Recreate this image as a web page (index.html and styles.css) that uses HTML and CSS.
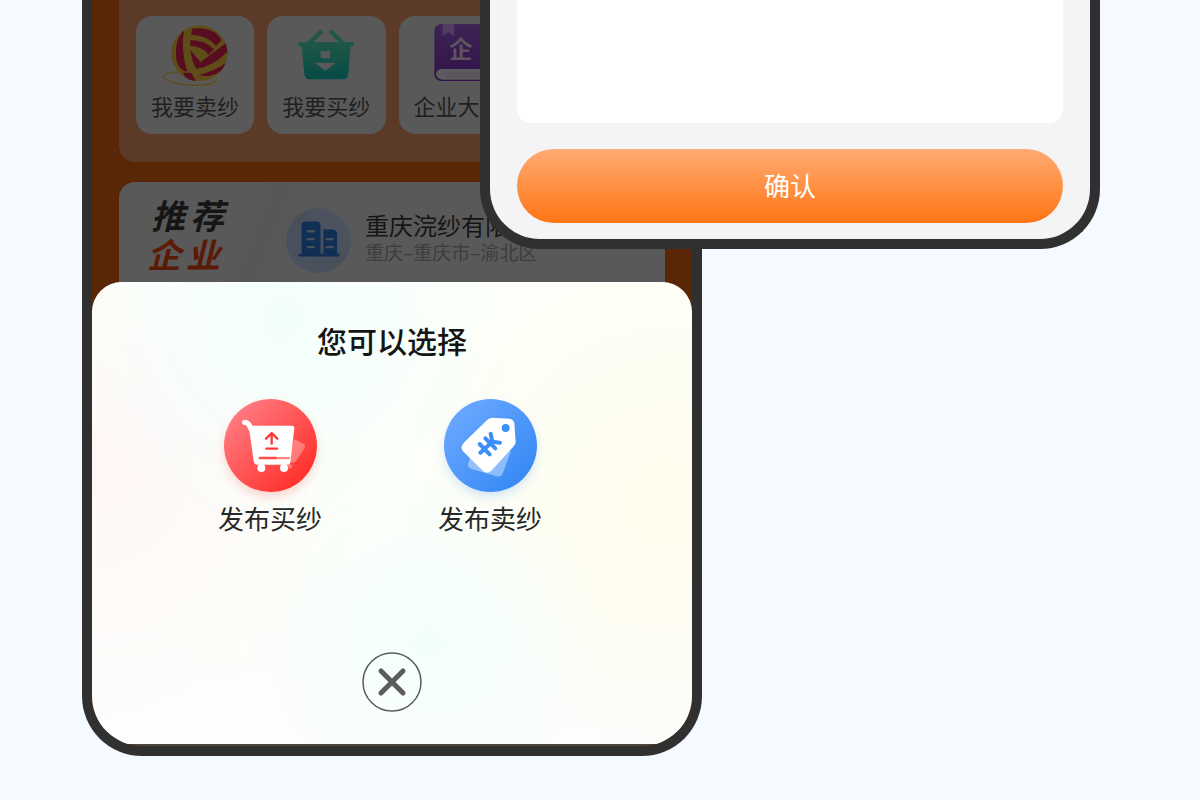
FILE: index.html
```html
<!DOCTYPE html>
<html lang="zh-CN">
<head>
    <meta charset="UTF-8">
    <meta name="viewport" content="width=device-width, initial-scale=1.0">
    <title>发布选择</title>
    <link rel="stylesheet" href="styles.css">
</head>
<body>
    <main class="stage">
        <section class="phone">
            <div class="home">
                <div class="menu">
                    <a class="tile" href="#">
                        <svg class="tile-icon" viewBox="246 72 198 192" aria-hidden="true">
                            <defs>
                                <clipPath id="ball"><circle cx="358" cy="160" r="84"/></clipPath>
                            </defs>
                            <circle cx="358" cy="160" r="84" fill="#5f4d19"/>
                            <g clip-path="url(#ball)" fill="#570c20">
                                <path d="M312 92Q282 118 289 180Q296 210 322 217Q302 150 312 92Z"/>
                                <path d="M336 86Q400 78 425 120L408 138Q385 106 333 104Z"/>
                                <path d="M331 120Q378 121 402 148L386 164Q367 139 331 138Z"/>
                                <path d="M331 151L362 186L445 124V168Q400 200 350 208Q334 180 331 151Z"/>
                                <path d="M308 218L332 215L350 246Q322 246 308 218Z"/>
                                <path d="M354 226Q404 214 442 186Q430 220 385 229Z"/>
                            </g>
                            <g clip-path="url(#ball)" fill="none" stroke="#5f4d19">
                                <path d="M333 145Q358 150 374 176" stroke-width="13"/>
                                <path d="M350 213Q404 204 444 162" stroke-width="13"/>
                            </g>
                            <path d="M336 217Q250 211 251 232Q268 252 340 256Q410 257 410 235" fill="none" stroke="#5f4d19" stroke-width="4"/>
                        </svg>
                        <span>我要卖纱</span>
                    </a>
                    <a class="tile" href="#">
                        <svg class="tile-icon" viewBox="100 72 198 192" aria-hidden="true">
                            <defs>
                                <linearGradient id="basket" x1="0" y1="0" x2="0" y2="1">
                                    <stop offset="0" stop-color="#205747"/>
                                    <stop offset="1" stop-color="#064b46"/>
                                </linearGradient>
                            </defs>
                            <path d="M150 129L183 96M249 129L215 96" stroke="#205747" stroke-width="13" stroke-linecap="round"/>
                            <path d="M120 126H278Q284 127 284 133Q284 139 273 140L266 222Q264 238 250 238H150Q136 238 134 222L126 140Q114 139 114 132Q114 127 120 126Z" fill="url(#basket)"/>
                            <path d="M183 153H211V174H183ZM165 188H229L197 212Z" fill="#595959"/>
                        </svg>
                        <span>我要买纱</span>
                    </a>
                    <a class="tile" href="#">
                        <svg class="tile-icon" viewBox="492 72 198 192" aria-hidden="true">
                            <defs>
                                <linearGradient id="book" x1="0" y1="0" x2="0" y2="1">
                                    <stop offset="0" stop-color="#3d2555"/>
                                    <stop offset="1" stop-color="#301248"/>
                                </linearGradient>
                            </defs>
                            <rect x="520" y="72" width="170" height="171" rx="20" fill="url(#book)"/>
                            <path d="M545 72H579V108L562 96L545 108Z" fill="#503d62"/>
                            <path d="M690 207H542Q526 208 525 223Q526 238 544 239H690Z" fill="#5c5a5e"/>
                            <path d="M546 220H690M552 228H690" stroke="#514e55" stroke-width="2"/>
                            <text class="book-text" x="600" y="175" text-anchor="middle">企</text>
                        </svg>
                        <span>企业大厅</span>
                    </a>
                </div>
                <div class="recommend">
                    <h2 class="recommend-title">
                        <span class="word"><span>推</span><span>荐</span></span>
                        <span class="word accent"><span>企</span><span>业</span></span>
                    </h2>
                    <svg class="avatar" viewBox="0 0 196 196" aria-hidden="true">
                        <defs>
                            <linearGradient id="sky" x1="0" y1="1" x2="1" y2="0">
                                <stop offset="0" stop-color="#4a5361"/>
                                <stop offset="0.5" stop-color="#484f5b"/>
                                <stop offset="1" stop-color="#515761"/>
                            </linearGradient>
                        </defs>
                        <circle cx="98" cy="98" r="98" fill="url(#sky)"/>
                        <path d="M47 138V54Q47 41 60 41H91Q104 41 104 54V138H113V65H140Q154 66 154 78V138H161V146H38V138Z" fill="#112f54"/>
                        <path d="M66 70H84M66 94H84M66 118H84M123 94H141M123 118H141" stroke="#46505e" stroke-width="7" stroke-linecap="round"/>
                    </svg>
                    <div class="company">
                        <div class="company-name">重庆浣纱有限公司</div>
                        <div class="company-area">重庆–重庆市–渝北区</div>
                    </div>
                </div>
            </div>

            <div class="sheet">
                <h1 class="sheet-title">您可以选择</h1>
                <div class="choices">
                    <button class="choice" type="button">
                        <svg class="choice-icon buy" viewBox="42 40 279 279" aria-hidden="true">
                            <path d="M252 160L280 174Q288 179 284 187L258 226Q252 234 242 230L236 226Z" fill="#fff" opacity="0.3"/>
                            <circle cx="239" cy="242" r="7" fill="#fff" opacity="0.3"/>
                            <path d="M104 110Q116 110 122 128" fill="none" stroke="#fff" stroke-width="16" stroke-linecap="round"/>
                            <path d="M116 120H247Q254 121 253 128L242 222Q243 237 232 237H142Q133 237 131 227Z" fill="#fff"/>
                            <circle cx="154" cy="247" r="12" fill="#fff"/>
                            <circle cx="222" cy="247" r="12" fill="#fff"/>
                            <path d="M185 174V144M168 159L185 142L202 159M169 189H201" fill="none" stroke="#ff3a36" stroke-width="7" stroke-linecap="round" stroke-linejoin="round"/>
                            <path d="M149 217H200" stroke="#ff4a46" stroke-width="7" stroke-linecap="round"/>
                            <path d="M198 214H240L239 221H204Z" fill="#ff8582"/>
                        </svg>
                        <span>发布买纱</span>
                    </button>
                    <button class="choice" type="button">
                        <svg class="choice-icon sell" viewBox="42 40 279 279" aria-hidden="true">
                            <path d="M122 212L114 235Q112 245 122 249L200 272Q212 275 218 265L243 194Z" fill="#fff" opacity="0.4"/>
                            <path d="M186 96L238 99Q251 101 253 113L257 168Q257 176 251 182L184 255Q172 266 160 257L99 197Q91 188 97 178Q100 173 106 167L169 105Q176 97 186 96Z" fill="#fff"/>
                            <circle cx="227" cy="127" r="12" fill="#3d8ef8"/>
                            <path d="M149 175L179 206M166 158L196 188M151 201L187 168M182 144L187 168L210 171" fill="none" stroke="#3d8ef8" stroke-width="12" stroke-linecap="round" stroke-linejoin="round"/>
                        </svg>
                        <span>发布卖纱</span>
                    </button>
                </div>
                <button class="close" type="button" aria-label="关闭">
                    <svg viewBox="0 0 60 60" aria-hidden="true">
                        <circle cx="30" cy="30" r="29" fill="none" stroke="#5c5c5c" stroke-width="1.5"/>
                        <path d="M19 19L41 41M41 19L19 41" stroke="#5c5c5c" stroke-width="5" stroke-linecap="round"/>
                    </svg>
                </button>
            </div>
        </section>

        <section class="phone phone-form">
            <div class="form-panel"></div>
            <button class="confirm" type="button">确认</button>
        </section>
    </main>
</body>
</html>
```
FILE: styles.css
```css
* {
    box-sizing: border-box;
}
body {
    font-family: "Noto Sans CJK SC", sans-serif;
    margin: 0;
    background: #f4faff;
}
button {
    font-family: inherit;
    padding: 0;
    border: 0;
    background: none;
    cursor: pointer;
}
.stage {
    display: flex;
    align-items: flex-start;
    min-height: 100vh;
    padding: 0 82px;
    overflow: hidden;
}

/* Device frames */
.phone {
    flex: 0 0 620px;
    border: 10px solid #303030;
    border-top: 0;
    border-radius: 0 0 60px 60px;
    background: #592606;
    overflow: hidden;
}
.phone-form {
    position: relative;
    margin-left: -222px;
    padding: 0 27px 16px;
    background: #f4f4f6;
}

/* Dimmed home screen */
.home {
    padding: 0 27px;
}
.menu {
    display: grid;
    grid-template-columns: repeat(4, 1fr);
    gap: 13px;
    padding: 16px 17px 28px;
    border-radius: 0 0 16px 16px;
    background: #5b3a28;
}
.tile {
    display: flex;
    flex-direction: column;
    align-items: center;
    gap: 2px;
    padding: 8px 0 14px;
    border-radius: 16px;
    background: #595959;
    color: #1f1f1f;
    font-size: 22px;
    line-height: 30px;
    text-decoration: none;
    white-space: nowrap;
}
.tile-icon {
    width: 66px;
    height: 64px;
}
.book-text {
    font-size: 70px;
    font-weight: 700;
    fill: #5a555f;
}
.recommend {
    display: flex;
    align-items: flex-start;
    height: 120px;
    margin-top: 20px;
    padding: 13px 0 0 32px;
    border-radius: 16px;
    background: linear-gradient(112deg, #595959 24%, #565656 28%, #575757 29%, #595959 34%);
}
.recommend-title {
    flex: 0 0 135px;
    margin: 0;
    color: #151515;
    font-size: 34px;
    font-style: italic;
    font-weight: 700;
    line-height: 39px;
}
.word {
    display: flex;
    gap: 5px;
}
.accent {
    margin-left: -4px;
    color: #5b1a05;
}
.avatar {
    flex: none;
    width: 65px;
    height: 65px;
    margin-top: 13px;
}
.company {
    margin: 15px 0 0 14px;
    white-space: nowrap;
}
.company-name {
    color: #151515;
    font-size: 24px;
    line-height: 30px;
}
.company-area {
    color: #3d3d3d;
    font-size: 19px;
    line-height: 24px;
}

/* Bottom sheet */
.sheet {
    position: relative;
    display: flex;
    flex-direction: column;
    align-items: center;
    margin-top: -20px;
    padding: 38px 0 32px;
    border-bottom: 2px solid #4d463f;
    border-radius: 30px 30px 0 0;
    background:
        radial-gradient(circle at 32% 8%, #f3fffc 0, transparent 38%),
        radial-gradient(circle at 56% 78%, #f3fffd 0, transparent 36%),
        radial-gradient(circle at 96% 48%, #fffcec 0, transparent 42%),
        radial-gradient(circle at 0 40%, #fff7f7 0, transparent 40%),
        linear-gradient(#fdfff9 60%, #fdfdfe);
}
.sheet-title {
    margin: 0;
    color: #151515;
    font-size: 30px;
    font-weight: 500;
    line-height: 40px;
}
.choices {
    display: grid;
    grid-template-columns: 220px 220px;
    align-self: flex-start;
    margin: 39px 0 0 68px;
}
.choice {
    display: flex;
    flex-direction: column;
    align-items: center;
    gap: 8px;
    color: #282828;
    font-size: 26px;
    line-height: 36px;
}
.choice-icon {
    width: 93px;
    height: 93px;
    border-radius: 50%;
}
.buy {
    background: linear-gradient(135deg, #ff7d84 10%, #ff2d27 90%);
    box-shadow: 0 5px 10px rgba(255, 60, 54, 0.2);
}
.sell {
    background: linear-gradient(135deg, #6aa8ff 10%, #3588f5 90%);
    box-shadow: 0 5px 10px rgba(60, 140, 248, 0.2);
}
.close {
    width: 60px;
    height: 60px;
    margin-top: 116px;
}
.close svg {
    display: block;
}

/* Form screen */
.form-panel {
    height: 123px;
    border-radius: 0 0 14px 14px;
    background: #fff;
}
.confirm {
    display: block;
    width: 100%;
    height: 74px;
    margin-top: 26px;
    padding-bottom: 3px;
    border-radius: 37px;
    background: linear-gradient(#ffab73, #ff7514);
    color: #fff;
    font-size: 26px;
}
```
